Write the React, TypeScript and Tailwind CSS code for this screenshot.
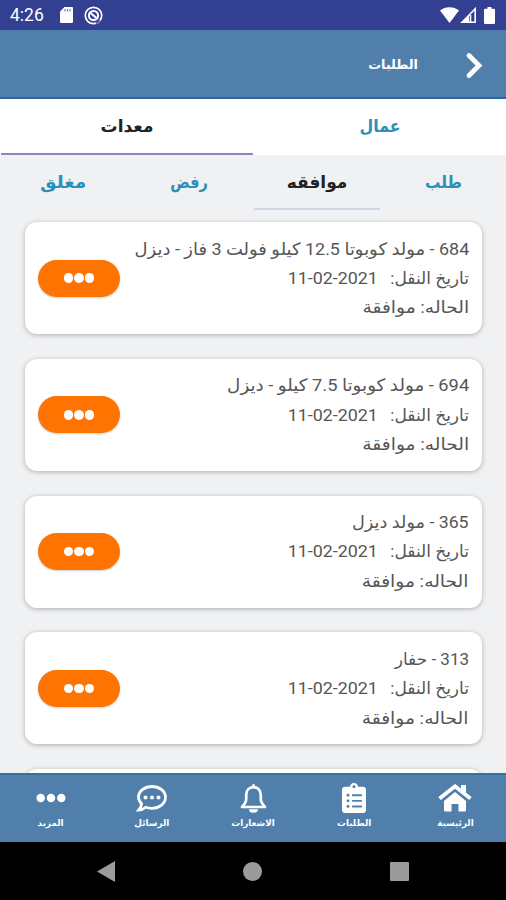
import type { ReactNode } from "react";
import { FaClipboardList, FaEllipsisH } from "react-icons/fa";

const requests = [
  { id: 684, title: "مولد كوبوتا 12.5 كيلو فولت 3 فاز - ديزل", fit: "scale-x-[1.055]" },
  { id: 694, title: "مولد كوبوتا 7.5 كيلو - ديزل", fit: "scale-x-[1.075]" },
  { id: 365, title: "مولد ديزل", fit: "scale-x-[1.04]" },
  { id: 313, title: "حفار", fit: "scale-x-100" },
];

function StatusBar() {
  return (
    <header dir="ltr" className="flex h-[30px] shrink-0 items-center bg-[#333f90] px-[10px] text-white">
      <span className="w-[50px] pt-0.5 font-[Roboto] text-[17.5px] leading-none">4:26</span>
      <svg className="h-4 w-[13px]" viewBox="0 0 13 16" fill="currentColor">
        <path d="M4.5 0H12a1 1 0 0 1 1 1v14a1 1 0 0 1-1 1H1a1 1 0 0 1-1-1V4.5z" />
        <path d="M5 2v2.500M7.500 2v2.500M10 2v2.500" stroke="#7780b8" strokeWidth="1.2" />
      </svg>
      <svg className="ml-[11px] size-[19px]" viewBox="0 0 19 19" fill="none" stroke="currentColor">
        <circle cx="9.5" cy="9.5" r="8.2" strokeWidth="1.7" />
        <circle cx="9.5" cy="9.5" r="4.6" strokeWidth="2" />
        <path d="M6.500 7l6 5" strokeWidth="2.2" />
        <path d="M12 17.500l4-3" stroke="#333f90" strokeWidth="1.3" />
      </svg>
      <div className="ml-auto flex items-center">
        <svg className="h-4 w-[19px]" viewBox="0 0 19 16" fill="currentColor">
          <path d="M9.500 16L0 3.600C5-1 14-1 19 3.600z" />
        </svg>
        <svg className="ml-px h-4 w-4" viewBox="0 0 16 16" fill="none" stroke="currentColor" strokeWidth="1.6">
          <path d="M2 15.200L15.200 1.800v13.400z" />
          <path d="M2 15.200l7-7v7z" fill="currentColor" stroke="none" />
          <path d="M10.500 8v7" />
        </svg>
        <svg className="ml-2 mr-px h-[17px] w-[11px]" viewBox="0 0 11 17" fill="currentColor">
          <path d="M3.500 0h4v1.700H10a1 1 0 0 1 1 1V16a1 1 0 0 1-1 1H1a1 1 0 0 1-1-1V2.700a1 1 0 0 1 1-1h2.500z" />
        </svg>
      </div>
    </header>
  );
}

function RequestCard({ id, title, fit }: { id: number; title: string; fit: string }) {
  return (
    <article className="flex h-28 shrink-0 items-center justify-between rounded-[12px] bg-white px-[13px] shadow-[0_1px_5px_rgba(0,0,0,0.28)]">
      <div className="pt-px text-[17px] leading-[29.3px] whitespace-nowrap text-[#555]">
        <p className={`origin-right ${fit}`}>
          {id} - {title}
        </p>
        <p className="flex gap-3">
          <span>تاريخ النقل:</span>
          <span dir="ltr" className="origin-right scale-x-[1.05]">11-02-2021</span>
        </p>
        <p className="origin-right scale-x-110">الحاله: موافقة</p>
      </div>
      <button className="flex h-[37px] w-[82px] shrink-0 items-center justify-center gap-px rounded-full bg-[#ff7300] shadow-[0_1px_2px_rgba(0,0,0,0.2)]">
        <span className="size-[9.5px] rounded-full bg-white" />
        <span className="size-[9.5px] rounded-full bg-white" />
        <span className="size-[9.5px] rounded-full bg-white" />
      </button>
    </article>
  );
}

function NavItem({ label, children }: { label: string; children: ReactNode }) {
  return (
    <a className="flex min-w-0 flex-1 flex-col items-center pt-[7px] text-white">
      <span className="flex h-[32px] items-center">{children}</span>
      <span className="mt-px text-[8.8px] leading-[16px] font-bold whitespace-nowrap">{label}</span>
    </a>
  );
}

export default function App() {
  return (
    <div dir="rtl" className="flex h-[900px] w-[506px] flex-col overflow-hidden bg-[#f0f1f3] font-['Roboto','DejaVu_Sans',sans-serif]">
      <StatusBar />

      {/* Title bar */}
      <div className="flex h-[69px] shrink-0 items-center border-b-2 border-[#2c6698] bg-[#507fab] pt-[3px] pr-[23px] text-white">
        <svg className="h-[27px] w-[18px]" viewBox="0 0 18 27" fill="none" stroke="currentColor" strokeWidth="4.8" strokeLinecap="round">
          <path d="M4 3.500L14 13.500 4 23.500" />
        </svg>
        <h1 className="mr-[47px] text-[12.8px] font-bold">الطلبات</h1>
      </div>

      {/* Main tabs */}
      <div className="flex h-[56px] shrink-0 bg-white text-[17px] font-bold text-[#2b8fb8]">
        <div className="flex flex-1 items-center justify-center">
          <span className="scale-x-[0.93]">عمال</span>
        </div>
        <div className="mx-px flex flex-1 items-center justify-center border-b-2 border-[#8888c0] pt-0.5 text-[#222]">معدات</div>
      </div>

      {/* Status filters */}
      <div className="flex h-[55px] shrink-0 text-[17px] font-bold text-[#2b8fb8]">
        <div className="flex flex-1 items-center justify-center">
          <span className="scale-x-90">طلب</span>
        </div>
        <div className="ml-[2px] flex flex-1 items-center justify-center border-b-2 border-[#d3d6e8] pt-0.5 text-[#222]">موافقه</div>
        <div className="flex flex-1 items-center justify-center">
          <span className="scale-x-[0.85]">رفض</span>
        </div>
        <div className="flex flex-1 items-center justify-center">
          <span className="scale-x-[1.09]">مغلق</span>
        </div>
      </div>

      <main className="flex min-h-0 flex-1 flex-col gap-[24.8px] overflow-hidden pt-3 pr-6 pl-[25px]">
        {requests.map((r) => (
          <RequestCard key={r.id} {...r} />
        ))}
        {/* Top edge of the next card */}
        <div className="h-28 shrink-0 rounded-[12px] bg-white shadow-[0_1px_5px_rgba(0,0,0,0.28)]" />
      </main>

      {/* Bottom navigation */}
      <nav className="flex h-[69px] shrink-0 border-t-2 border-[#397097] bg-[#507fab]">
        <NavItem label="الرئيسية">
          <svg className="h-[28px] w-[34px]" viewBox="0 0 34 28" fill="currentColor">
            <path d="M23 1H28v12l-5-4z" />
            <path d="M6 17L17 8l11 9V26a1.500 1.500 0 0 1-1.500 1.500H20.500v-7.500h-7v7.500h-6A1.500 1.500 0 0 1 6 26z" />
            <path d="M1.500 14.500L17 2.300l15.500 12.200" fill="none" stroke="currentColor" strokeWidth="3.8" />
            <path d="M3.500 17L17 6.500 30.500 17" fill="none" stroke="#507fab" strokeWidth="1.1" />
          </svg>
        </NavItem>
        <NavItem label="الطلبات">
          <FaClipboardList className="h-[30px] w-[24px]" preserveAspectRatio="none" />
        </NavItem>
        <NavItem label="الاشعارات">
          <svg className="h-[29px] w-[27px]" viewBox="0 0 27 29" fill="none" stroke="currentColor" strokeWidth="2.7" strokeLinejoin="round">
            <path d="M13.500 3.200C9 3.200 6.200 6.600 6.200 11v4.500c0 3-1.700 4.800-4.200 7.500h23c-2.500-2.700-4.200-4.500-4.200-7.500V11c0-4.400-2.800-7.800-7.300-7.800z" />
            <path d="M13.500.3v3" />
            <path d="M9 25.200h9a4.500 3.500 0 0 1-9 0z" fill="currentColor" stroke="none" />
          </svg>
        </NavItem>
        <NavItem label="الرسائل">
          <svg className="h-[27px] w-[31px]" viewBox="0 0 31 27" fill="none" stroke="currentColor" strokeWidth="2.8">
            <path d="M16 1.500C8.300 1.500 2.500 6.200 2.500 12c0 2.700 1.200 5 3.100 6.800-.3 2.600-1.600 4.700-3.100 6.400 3.200 0 5.300-1.300 7.200-2.900 1.900.7 3.900 1 6.100 1 7.700 0 13.700-4.900 13.700-11S23.700 1.500 16 1.500z" />
            <g fill="currentColor" stroke="none">
              <circle cx="9.500" cy="12.500" r="2" />
              <circle cx="16" cy="12.500" r="2" />
              <circle cx="22.500" cy="12.500" r="2" />
            </g>
          </svg>
        </NavItem>
        <NavItem label="المزيد">
          <FaEllipsisH className="size-[30px]" />
        </NavItem>
      </nav>

      {/* Android navigation keys */}
      <footer dir="ltr" className="flex h-[58px] shrink-0 items-center justify-center gap-32 bg-black text-[#9b9b9b]">
        <svg className="h-[21px] w-[18px]" viewBox="0 0 18 21" fill="currentColor">
          <path d="M18 0v21L0 10.500z" />
        </svg>
        <span className="size-[19px] rounded-full bg-current" />
        <span className="size-[19px] rounded-[1px] bg-current" />
      </footer>
    </div>
  );
}
